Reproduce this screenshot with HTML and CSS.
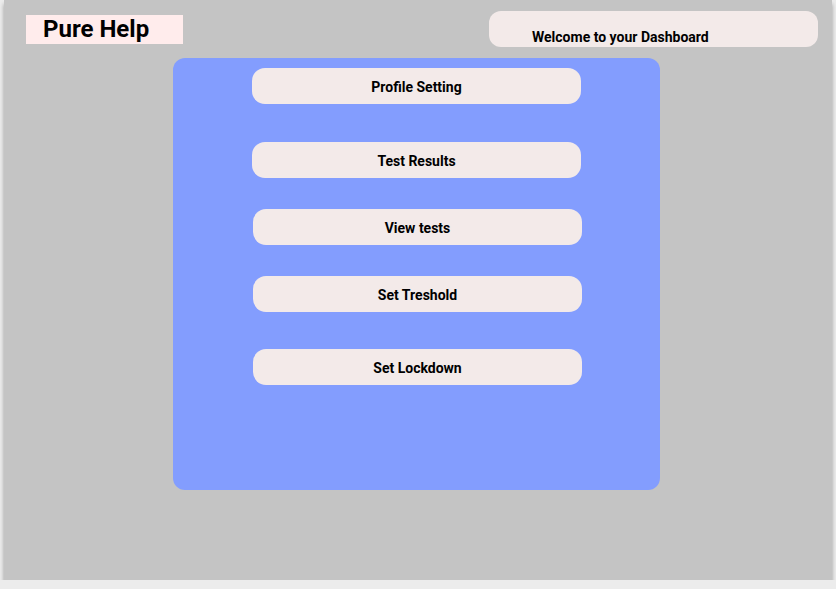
FILE: index.html
```html
<!DOCTYPE html>
<html>
<head>
<meta charset="utf-8">
<link rel="stylesheet" href="styles.css">
</head>
<body>
<div class="frame">
  <header class="header">
    <div class="logo">Pure Help</div>
    <div class="welcome">Welcome to your Dashboard</div>
  </header>
  <main class="panel">
    <div class="btn b1">Profile Setting</div>
    <div class="btn b2">Test Results</div>
    <div class="btn b3">View tests</div>
    <div class="btn b4">Set Treshold</div>
    <div class="btn b5">Set Lockdown</div>
  </main>
</div>
</body>
</html>
```
FILE: styles.css
```css
html, body {
  margin: 0;
  padding: 0;
  background: #ececec;
  font-family: Roboto, "Liberation Sans", sans-serif;
  color: #000;
}
.frame {
  margin-left: 4px;
  width: 828px;
  height: 580px;
  background: #c4c4c4;
  box-shadow: 0 4px 4px rgba(0, 0, 0, 0.35);
}
.header {
  display: flex;
  align-items: flex-start;
}
.logo {
  margin: 15px 0 0 22px;
  width: 157px;
  height: 29px;
  box-sizing: border-box;
  padding-left: 17px;
  background: #ffecec;
  font-size: 24px;
  font-weight: 700;
  line-height: 29px;
}
.welcome {
  margin: 11px 0 0 306px;
  width: 329px;
  height: 36px;
  box-sizing: border-box;
  padding: 18px 0 0 43px;
  background: #f3eae9;
  border-radius: 12px;
  font-size: 14px;
  font-weight: 700;
  line-height: 16px;
}
.panel {
  margin: 11px 0 0 169px;
  width: 487px;
  height: 432px;
  box-sizing: border-box;
  padding-top: 10px;
  background: #839dfe;
  border-radius: 12px;
  display: flex;
  flex-direction: column;
}
.btn {
  width: 329px;
  height: 36px;
  box-sizing: border-box;
  padding-top: 2px;
  margin-left: 79px;
  background: #f3eae9;
  border-radius: 13px;
  font-size: 14px;
  font-weight: 700;
  line-height: 34px;
  text-align: center;
}
.b2 { margin-top: 38px; }
.b3 { margin-top: 31px; margin-left: 80px; }
.b4 { margin-top: 31px; margin-left: 80px; }
.b5 { margin-top: 37px; margin-left: 80px; }
```
